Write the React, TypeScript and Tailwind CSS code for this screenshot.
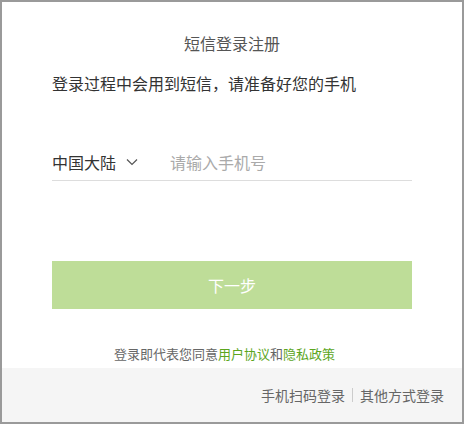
import React, { useState } from 'react';

const font = { fontFamily: '"Noto Sans CJK SC", "Noto Sans", sans-serif' };

function App() {
  const [phone, setPhone] = useState('');

  return (
    <div
      className="w-[464px] h-[424px] border-2 border-[#9a9a9a] bg-white flex flex-col"
      style={font}
    >
      <div className="flex-1 flex flex-col px-[50px]">
        <h1 className="pt-[30px] text-center text-[16px] leading-[22px] text-[#555] font-normal">
          短信登录注册
        </h1>
        <p className="mt-[18px] text-[16px] leading-[22px] text-[#333]">
          登录过程中会用到短信，请准备好您的手机
        </p>

        <div className="mt-[50px] h-[37px] flex items-center border-b border-[#ddd]">
          <button className="flex items-center text-[16px] leading-[22px] text-[#333]">
            中国大陆
            <svg className="ml-[10px]" width="12" height="8" viewBox="0 0 12 8" fill="none">
              <polyline points="1,1.5 6,6.5 11,1.5" stroke="#555" strokeWidth="1.2" />
            </svg>
          </button>
          <input
            className="ml-[32px] flex-1 text-[16px] leading-[22px] text-[#333] placeholder:text-[#aaa] outline-none bg-transparent"
            placeholder="请输入手机号"
            value={phone}
            onChange={(e) => setPhone(e.target.value)}
          />
        </div>

        <button className="mt-[80px] h-[48px] w-full bg-[#bedd98] text-white text-[16px]">
          下一步
        </button>

        <p className="mt-[36px] pr-[15px] text-center text-[13px] leading-[18px] text-[#666]">
          登录即代表您同意<a className="text-[#5ca61e]">用户协议</a>和
          <a className="text-[#5ca61e]">隐私政策</a>
        </p>
      </div>

      <div className="h-[54px] bg-[#f5f5f5] flex items-center justify-end pr-[18px] text-[14px] text-[#666]">
        <a>手机扫码登录</a>
        <span className="mx-[7px] w-px h-[14px] bg-[#ccc]" />
        <a>其他方式登录</a>
      </div>
    </div>
  );
}

export default App;
